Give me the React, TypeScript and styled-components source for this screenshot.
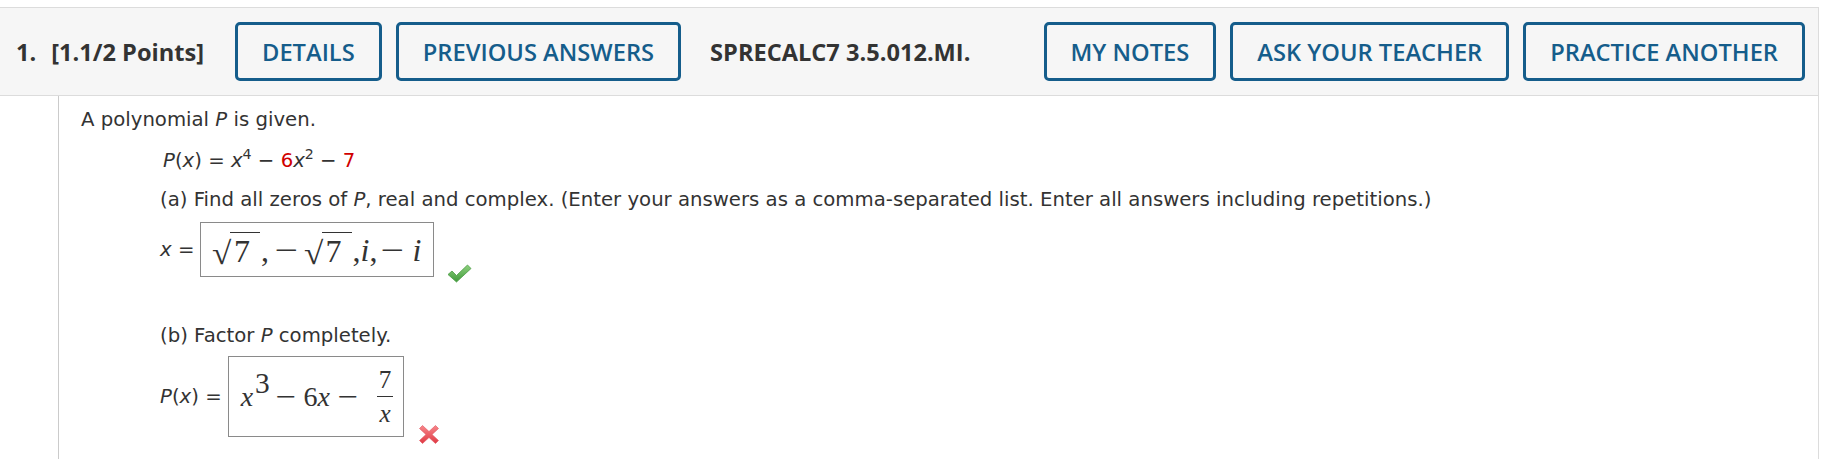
import React from "react";
import styled, { createGlobalStyle } from "styled-components";

const Global = createGlobalStyle`
  html, body { margin: 0; padding: 0; background: #fff; }
  body { font-family: "Open Sans", "DejaVu Sans", sans-serif; }
  * { box-sizing: border-box; }
`;

const Page = styled.div`
  padding-top: 7px;
  width: 1819px;
`;

const Header = styled.header`
  display: flex;
  align-items: center;
  height: 89px;
  background: #f6f6f6;
  border-top: 1px solid #dcdcdc;
  border-bottom: 1px solid #dcdcdc;
  border-right: 1px solid #dcdcdc;
  padding: 0 13px 0 16px;
`;

const Title = styled.div`
  display: flex;
  align-items: center;
  gap: 15px;
  font-size: 23.6px;
  font-weight: 700;
  color: #333;
  margin-right: 31px;
  white-space: nowrap;
`;

const Group = styled.div<{ $push?: boolean }>`
  display: flex;
  align-items: center;
  gap: 14px;
  margin-left: ${(p) => (p.$push ? "auto" : "0")};
`;

const Btn = styled.button`
  height: 59px;
  padding: 0 24px;
  border: 3px solid #155d8b;
  border-radius: 5px;
  background: transparent;
  color: #155d8b;
  font-family: "Open Sans", sans-serif;
  font-size: 23.7px;
  font-weight: 600;
  white-space: nowrap;
  cursor: pointer;
`;

const Code = styled.div`
  margin-left: 29px;
  font-size: 23.6px;
  font-weight: 700;
  color: #333;
  white-space: nowrap;
`;

const Body = styled.section`
  margin-left: 58px;
  min-height: 363px;
  border-left: 1px solid #cbcbcb;
  border-right: 1px solid #dcdcdc;
  padding: 12px 0 20px 22px;
  font-family: "DejaVu Sans", Verdana, sans-serif;
  font-size: 19.7px;
  line-height: 24px;
  color: #333;
`;

const Para = styled.div<{ $indent?: number; $top?: number }>`
  margin-left: ${(p) => p.$indent ?? 0}px;
  margin-top: ${(p) => p.$top ?? 0}px;
  white-space: nowrap;
`;

const Red = styled.span`
  color: #d00000;
`;

const Sup = styled.sup`
  font-size: 0.72em;
  line-height: 0;
  vertical-align: 0.55em;
`;

const AnswerRow = styled.div<{ $top: number }>`
  display: flex;
  align-items: center;
  margin-left: 79px;
  margin-top: ${(p) => p.$top}px;
`;

const Label = styled.span<{ $gap: number }>`
  margin-right: ${(p) => p.$gap}px;
  white-space: nowrap;
`;

const MathBox = styled.div<{ $w: number; $h: number; $size: number }>`
  width: ${(p) => p.$w}px;
  height: ${(p) => p.$h}px;
  border: 1px solid #8a8a8a;
  background: #fff;
  display: flex;
  align-items: center;
  padding-left: 12px;
  font-family: "Liberation Serif", "DejaVu Serif", serif;
  font-size: ${(p) => p.$size}px;
  color: #333;
  white-space: nowrap;
  overflow: hidden;
`;

const M = styled.span<{ $ml?: number; $it?: boolean }>`
  display: inline-block;
  margin-left: ${(p) => p.$ml ?? 0}px;
  font-style: ${(p) => (p.$it ? "italic" : "normal")};
  line-height: 1;
`;

const Minus = styled.span<{ $ml?: number; $mr?: number }>`
  display: inline-block;
  margin-left: ${(p) => p.$ml ?? 0}px;
  margin-right: ${(p) => p.$mr ?? 0}px;
  line-height: 1;
  transform: scaleX(1.3);
`;

const Radical = styled.span`
  display: inline-flex;
  align-items: flex-end;
`;

const RadSign = styled.span`
  display: inline-block;
  font-size: 1em;
  line-height: 1;
  transform: scaleX(1.1) translateY(2px);
`;

const Radicand = styled.span`
  display: inline-block;
  border-top: 1.5px solid #333;
  padding: 2px 10px 0 4px;
  line-height: 1;
  margin-left: -1px;
`;

const SupM = styled.span`
  display: inline-block;
  font-size: 1.05em;
  line-height: 1;
  transform: translateY(-13px);
  margin-left: 2px;
`;

const Frac = styled.span`
  display: inline-flex;
  flex-direction: column;
  align-items: center;
  margin-left: 21px;
  font-size: 0.9em;
  line-height: 1;
`;

const Num = styled.span`
  padding: 0 2px 3px;
  border-bottom: 1.5px solid #333;
`;

const Den = styled.span`
  font-style: italic;
  padding-top: 4px;
`;

const Mark = styled.span<{ $drop: number; $gap: number }>`
  display: inline-flex;
  margin-left: ${(p) => p.$gap}px;
  align-self: flex-end;
  margin-bottom: -${(p) => p.$drop}px;
`;

const Check = () => (
  <svg width="25" height="19" viewBox="0 0 25 19">
    <defs>
      <linearGradient id="gck" x1="0" y1="0" x2="0" y2="1">
        <stop offset="0" stopColor="#8fd17f" />
        <stop offset="1" stopColor="#3f9a3a" />
      </linearGradient>
    </defs>
    <path
      d="M1 10.5 L5 7 L9.5 11.5 L20.5 1 L24 4.5 L9.5 18 Z"
      fill="url(#gck)"
      stroke="#4a9c44"
      strokeWidth="0.8"
      strokeLinejoin="round"
    />
  </svg>
);

const Cross = () => (
  <svg width="20" height="19" viewBox="0 0 20 19">
    <defs>
      <linearGradient id="gx" x1="0" y1="0" x2="0" y2="1">
        <stop offset="0" stopColor="#f7868a" />
        <stop offset="1" stopColor="#df3a44" />
      </linearGradient>
    </defs>
    <path
      d="M3.5 0.5 L10 6.5 L16.5 0.5 L19.5 3.5 L13 9.5 L19.5 15.5 L16.5 18.5 L10 12.5 L3.5 18.5 L0.5 15.5 L7 9.5 L0.5 3.5 Z"
      fill="url(#gx)"
      stroke="#e0505a"
      strokeWidth="0.6"
      strokeLinejoin="round"
    />
  </svg>
);

export default function App() {
  return (
    <Page>
      <Global />
      <Header>
        <Title>
          <span>1.</span>
          <span>[1.1/2 Points]</span>
        </Title>
        <Group>
          <Btn>DETAILS</Btn>
          <Btn>PREVIOUS ANSWERS</Btn>
        </Group>
        <Code>SPRECALC7 3.5.012.MI.</Code>
        <Group $push>
          <Btn>MY NOTES</Btn>
          <Btn>ASK YOUR TEACHER</Btn>
          <Btn>PRACTICE ANOTHER</Btn>
        </Group>
      </Header>
      <Body>
        <Para>
          A polynomial <i>P</i> is given.
        </Para>
        <Para $indent={82} $top={17}>
          <i>P</i>(<i>x</i>) = <i>x</i>
          <Sup>4</Sup> − <Red>6</Red>
          <i>x</i>
          <Sup>2</Sup> − <Red>7</Red>
        </Para>
        <Para $indent={79} $top={15}>
          (a) Find all zeros of <i>P</i>, real and complex. (Enter your answers as a
          comma-separated list. Enter all answers including repetitions.)
        </Para>
        <AnswerRow $top={10}>
          <Label $gap={6}>
            <i>x</i> =
          </Label>
          <MathBox $w={234} $h={55} $size={32}>
            <Radical>
              <RadSign>√</RadSign>
              <Radicand>7</Radicand>
            </Radical>
            <M $ml={1}>,</M>
            <Minus $ml={8}>−</Minus>
            <M $ml={10}>
              <Radical>
                <RadSign>√</RadSign>
                <Radicand>7</Radicand>
              </Radical>
            </M>
            <M $ml={1}>,</M>
            <M $it>i</M>
            <M>,</M>
            <Minus $ml={6}>−</Minus>
            <M $ml={11} $it>
              i
            </M>
          </MathBox>
          <Mark $drop={6} $gap={13}>
            <Check />
          </Mark>
        </AnswerRow>
        <Para $indent={79} $top={47}>
          (b) Factor <i>P</i> completely.
        </Para>
        <AnswerRow $top={8}>
          <Label $gap={6}>
            <i>P</i>(<i>x</i>) =
          </Label>
          <MathBox $w={176} $h={81} $size={28}>
            <M $it>x</M>
            <SupM>3</SupM>
            <Minus $ml={8}>−</Minus>
            <M $ml={10}>6</M>
            <M $it>x</M>
            <Minus $ml={10}>−</Minus>
            <Frac>
              <Num>7</Num>
              <Den>x</Den>
            </Frac>
          </MathBox>
          <Mark $drop={7} $gap={15}>
            <Cross />
          </Mark>
        </AnswerRow>
      </Body>
    </Page>
  );
}
